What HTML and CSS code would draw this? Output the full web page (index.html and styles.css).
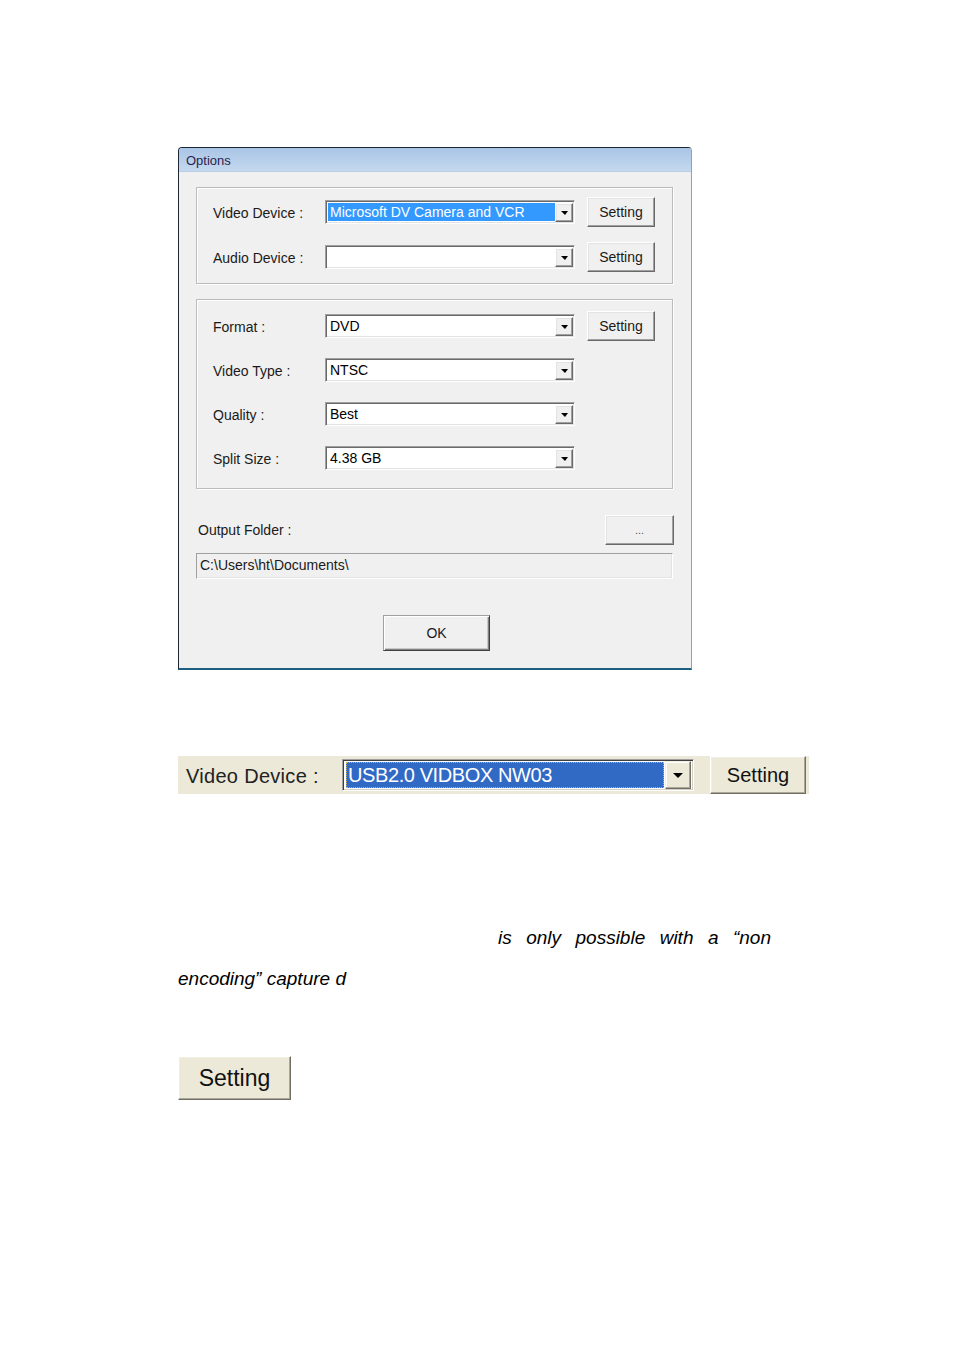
FILE: index.html
```html
<!DOCTYPE html>
<html lang="en">
<head>
    <link rel="stylesheet" href="styles.css">
    <meta charset="UTF-8">
    <meta name="viewport" content="width=device-width, initial-scale=1.0">
    <title>Options</title>
</head>
<body>
    <div class="page">
        <div class="dialog">
            <div class="titlebar">Options</div>
            <div class="dialog_body">
                <div class="group" id="devices">
                    <div class="row">
                        <span class="label">Video Device :</span>
                        <div class="combo"><span class="value selected">Microsoft DV Camera and VCR</span><span class="arrow"></span></div>
                        <button class="btn">Setting</button>
                    </div>
                    <div class="row">
                        <span class="label">Audio Device :</span>
                        <div class="combo"><span class="value"></span><span class="arrow"></span></div>
                        <button class="btn">Setting</button>
                    </div>
                </div>
                <div class="group" id="encoding">
                    <div class="row">
                        <span class="label">Format :</span>
                        <div class="combo"><span class="value">DVD</span><span class="arrow"></span></div>
                        <button class="btn">Setting</button>
                    </div>
                    <div class="row">
                        <span class="label">Video Type :</span>
                        <div class="combo"><span class="value">NTSC</span><span class="arrow"></span></div>
                    </div>
                    <div class="row">
                        <span class="label">Quality :</span>
                        <div class="combo"><span class="value">Best</span><span class="arrow"></span></div>
                    </div>
                    <div class="row">
                        <span class="label">Split Size :</span>
                        <div class="combo"><span class="value">4.38 GB</span><span class="arrow"></span></div>
                    </div>
                </div>
                <div class="output_row">
                    <span class="output_label">Output Folder :</span>
                    <button class="btn browse">...</button>
                </div>
                <div class="output_field">C:\Users\ht\Documents\</div>
                <div class="ok_row">
                    <button class="btn ok">OK</button>
                </div>
            </div>
        </div>

        <div class="xp_strip">
            <span class="xp_label">Video Device :</span>
            <div class="xp_combo">
                <span class="xp_value">USB2.0 VIDBOX NW03</span>
                <span class="xp_arrow"><span class="tri"></span></span>
            </div>
            <button class="xp_btn">Setting</button>
        </div>

        <div class="note">
            <p class="note_first">is only possible with a “non</p>
            <p class="note_line">encoding” capture d</p>
        </div>

        <button class="xp_btn big">Setting</button>
    </div>
</body>
</html>
```

FILE: styles.css
```css
body {
    margin: 0;
    padding: 0;
    background: #fff;
    font-family: "Liberation Sans", Arial, sans-serif;
    color: #000;
}
button {
    font-family: inherit;
    padding: 0;
    margin: 0;
    cursor: default;
}
.page {
    padding: 147px 0 0 178px;
}

/* options dialog */
.dialog {
    width: 514px;
    box-sizing: border-box;
    border: 1px solid #1c2733;
    border-right-color: #8da3bb;
    border-bottom: 2px solid #1d5f80;
    border-radius: 4px 4px 0 0;
    background: #f0f0f0;
}
.titlebar {
    height: 24px;
    line-height: 25px;
    padding-left: 7px;
    font-size: 13px;
    color: #2b1f4f;
    background: linear-gradient(#a9c5e6, #c4d8ef);
    border-radius: 3px 3px 0 0;
    border-bottom: 1px solid #b9cde3;
    box-sizing: border-box;
}
.dialog_body {
    padding: 15px 18px 17px 17px;
}
.group {
    border: 1px solid #bcbcbc;
    box-shadow: inset 1px 1px 0 #fff, 1px 1px 0 #fff;
    padding: 9px 0 11px 16px;
    display: grid;
    grid-template-columns: 100px 250px 68px;
    grid-auto-rows: 30px;
    column-gap: 12px;
    row-gap: 15px;
}
.group#encoding {
    margin-top: 15px;
    padding: 11px 0 15px 16px;
    row-gap: 14px;
}
.row {
    display: contents;
}
.row > * {
    align-self: center;
}
.label {
    grid-column: 1;
    font-size: 14px;
    color: #1a1a1a;
    white-space: nowrap;
    padding-top: 2px;
}
.combo {
    grid-column: 2;
    height: 24px;
    box-sizing: border-box;
    background: #fff;
    border: 1px solid;
    border-color: #a0a0a0 #fff #fff #a0a0a0;
    box-shadow: inset 1px 1px 0 #696969, inset -1px -1px 0 #e3e3e3;
    display: flex;
    align-items: center;
    padding: 2px;
}
.value {
    flex: 1;
    height: 18px;
    line-height: 18px;
    font-size: 14px;
    padding-left: 2px;
    white-space: nowrap;
}
.value.selected {
    background: #3399ff;
    color: #fff;
}
.arrow {
    width: 18px;
    height: 19px;
    margin-right: -1px;
    box-sizing: border-box;
    background: #f0f0f0;
    border: 1px solid;
    border-color: #fff #696969 #696969 #fff;
    box-shadow: inset -1px -1px 0 #a0a0a0, inset 1px 1px 0 #e3e3e3;
    display: flex;
    align-items: center;
    justify-content: center;
}
.arrow::after {
    content: "";
    border-left: 4px solid transparent;
    border-right: 3px solid transparent;
    border-top: 4px solid #000;
    margin-top: 1px;
}
.btn {
    grid-column: 3;
    height: 30px;
    font-size: 14px;
    color: #1a1a1a;
    background: #f0f0f0;
    border: 1px solid;
    border-color: #fff #696969 #696969 #fff;
    box-shadow: inset -1px -1px 0 #a0a0a0, inset 1px 1px 0 #e3e3e3;
}
.output_row {
    margin-top: 26px;
    display: flex;
    justify-content: space-between;
    align-items: center;
}
.output_label {
    font-size: 14px;
    padding-left: 2px;
    color: #1a1a1a;
}
.btn.browse {
    width: 69px;
    margin-right: -1px;
    font-size: 11px;
    color: #555;
}
.output_field {
    margin-top: 8px;
    height: 26px;
    box-sizing: border-box;
    border: 1px solid;
    border-color: #a0a0a0 #fff #fff #a0a0a0;
    box-shadow: inset -1px -1px 0 #e3e3e3;
    font-size: 14px;
    line-height: 22px;
    padding-left: 3px;
    color: #1a1a1a;
}
.ok_row {
    margin-top: 36px;
    display: flex;
    justify-content: center;
}
.btn.ok {
    width: 107px;
    height: 36px;
    margin-left: 4px;
    border-color: #a0a0a0 #404040 #404040 #a0a0a0;
    box-shadow: inset 1px 1px 0 #fff, inset -1px -1px 0 #808080, inset -2px -2px 0 #c8c8c8;
}

/* xp capture strip */
.xp_strip {
    margin-top: 86px;
    width: 631px;
    height: 38px;
    background: #ece9d8;
    display: flex;
    align-items: center;
}
.xp_label {
    width: 164px;
    box-sizing: border-box;
    padding-left: 8px;
    padding-top: 2px;
    font-size: 20px;
    color: #222;
    letter-spacing: 0.3px;
}
.xp_combo {
    width: 352px;
    height: 32px;
    box-sizing: border-box;
    margin-right: 16px;
    border: 1px solid;
    border-color: #a0a0a0 #fff #fff #a0a0a0;
    box-shadow: inset 1px 1px 0 #404040, inset -1px -1px 0 #d4d0c8;
    background: #fff;
    display: flex;
    align-items: center;
    padding: 2px 2px 2px 3px;
}
.xp_value {
    flex: 1;
    height: 26px;
    line-height: 26px;
    box-sizing: border-box;
    background: #316ac5;
    outline: 1px dotted #c6b25c;
    outline-offset: -1px;
    color: #fff;
    font-size: 20px;
    padding-left: 2px;
    letter-spacing: -0.4px;
    white-space: nowrap;
}
.xp_arrow {
    width: 26px;
    height: 28px;
    box-sizing: border-box;
    margin-left: 1px;
    background: #ece9d8;
    border: 1px solid;
    border-color: #f1efe2 #716f64 #716f64 #f1efe2;
    box-shadow: inset -1px -1px 0 #aca899, inset 1px 1px 0 #fff;
    display: flex;
    align-items: center;
    justify-content: center;
}
.tri {
    border-left: 5px solid transparent;
    border-right: 5px solid transparent;
    border-top: 5px solid #000;
}
.xp_btn {
    width: 96px;
    height: 38px;
    font-size: 20px;
    color: #111;
    background: #ece9d8;
    border: 1px solid;
    border-color: #fff #716f64 #716f64 #fff;
    box-shadow: inset -1px -1px 0 #aca899, inset 1px 1px 0 #f1efe2;
}

/* note text */
.note {
    margin-top: 123px;
    font-size: 19px;
    font-style: italic;
    line-height: 41px;
}
.note p {
    margin: 0;
}
.note_first {
    margin-left: 320px !important;
    width: 273px;
    text-align: justify;
    text-align-last: justify;
}

.xp_btn.big {
    display: block;
    margin-top: 57px;
    width: 113px;
    height: 44px;
    font-size: 23px;
}
```
